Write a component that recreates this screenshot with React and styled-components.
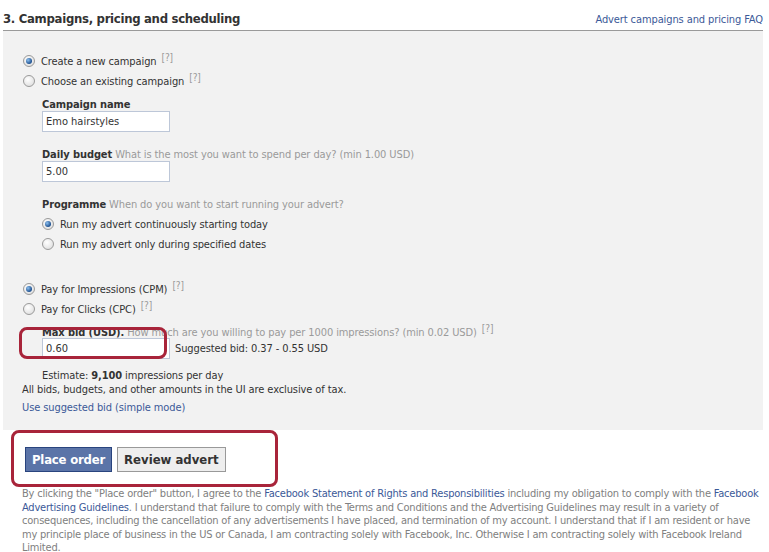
import styled, { createGlobalStyle } from "styled-components";

const GlobalStyle = createGlobalStyle`
  body {
    margin: 0;
    background: #fff;
    font-family: "DejaVu Sans Condensed", "DejaVu Sans", sans-serif;
    font-size: 11px;
    letter-spacing: -0.1px;
    color: #333;
  }
`;

const Page = styled.div`
  width: 769px;
  height: 552px;
  overflow: hidden;
`;

const Header = styled.div`
  margin-left: 3px;
  width: 760px;
  height: 31px;
  border-bottom: 1px solid #9a9a9a;
  display: flex;
  justify-content: space-between;
  align-items: baseline;
  box-sizing: border-box;
  padding-top: 11px;
`;

const Title = styled.h2`
  margin: 0;
  font-size: 13px;
  font-weight: bold;
  letter-spacing: -0.3px;
  color: #333;
`;

const FaqLink = styled.a`
  color: #3b5998;
  font-size: 11px;
  text-decoration: none;
`;

const Panel = styled.div`
  margin-left: 3px;
  width: 760px;
  height: 399px;
  background: #f2f2f2;
  box-sizing: border-box;
  padding: 20px 0 0 20px;
  display: flex;
  flex-direction: column;
`;

const RadioRow = styled.label`
  height: 20px;
  display: flex;
  align-items: center;
  gap: 6px;
`;

const Radio = styled.span`
  width: 12px;
  height: 12px;
  border-radius: 50%;
  border: 1px solid #9a9a9a;
  box-sizing: border-box;
  background: radial-gradient(circle at 40% 35%, #ffffff, #d8d8d8);
  display: inline-flex;
  align-items: center;
  justify-content: center;
  &::after {
    content: "";
    display: ${(p) => (p.$checked ? "block" : "none")};
    width: 6px;
    height: 6px;
    border-radius: 50%;
    background: radial-gradient(circle at 35% 35%, #8cc0f0, #1d4f8e 70%);
  }
`;

const Help = styled.sup`
  color: #9a9a9a;
  font-size: 10px;
  margin-left: 5px;
  line-height: 0;
  position: relative;
  top: 1px;
`;

const Field = styled.div`
  margin-left: ${(p) => (p.$flush ? 0 : 19)}px;
  margin-top: ${(p) => p.$top || 0}px;
  position: relative;
`;

const Label = styled.div`
  height: 14px;
  line-height: 14px;
  margin-bottom: ${(p) => p.$gap || 0}px;
  color: #9a9a9a;
  b {
    color: #333;
  }
`;

const Input = styled.input`
  width: 128px;
  height: 21px;
  box-sizing: border-box;
  border: 1px solid #bdc7d8;
  background: #fff;
  font: inherit;
  color: #333;
  padding: 0 3px;
  margin: 0;
  outline: none;
`;

const InputRow = styled.div`
  display: flex;
  align-items: center;
  gap: 5px;
`;

const Highlight = styled.div`
  position: absolute;
  left: ${(p) => p.$x}px;
  top: ${(p) => p.$y}px;
  width: ${(p) => p.$w}px;
  height: ${(p) => p.$h}px;
  border: 3px solid #a8243a;
  border-radius: 8px;
  box-sizing: border-box;
  pointer-events: none;
`;

const Estimate = styled.div`
  margin: 10px 0 0 19px;
  line-height: 14px;
`;

const Note = styled.div`
  line-height: 14px;
  margin-left: -1px;
`;

const TextLink = styled.a`
  color: #3b5998;
  text-decoration: none;
`;

const SmallLink = styled(TextLink)`
  margin: 4px 0 0 -1px;
  line-height: 14px;
`;

const Actions = styled.div`
  position: relative;
  display: flex;
  gap: 5px;
  padding: 17px 0 0 25px;
  height: 57px;
  box-sizing: border-box;
`;

const Button = styled.button`
  height: 25px;
  padding: 0 6px;
  font-family: inherit;
  font-size: 13px;
  font-weight: bold;
  letter-spacing: ${(p) => (p.$primary ? "-0.2px" : "0")};
  border: 1px solid ${(p) => (p.$primary ? "#29447e" : "#999")};
  background: ${(p) => (p.$primary ? "#5b74a8" : "#eeeeee")};
  color: ${(p) => (p.$primary ? "#fff" : "#333")};
  cursor: pointer;
`;

const Legal = styled.p`
  margin: 0 0 0 22px;
  width: 747px;
  color: #808080;
  letter-spacing: -0.2px;
  line-height: 13.5px;
`;

const App = () => {
  return (
    <Page>
      <GlobalStyle />
      <Header>
        <Title>3. Campaigns, pricing and scheduling</Title>
        <FaqLink href="#">Advert campaigns and pricing FAQ</FaqLink>
      </Header>
      <Panel>
        <RadioRow>
          <Radio $checked />
          <span>
            Create a new campaign<Help>[?]</Help>
          </span>
        </RadioRow>
        <RadioRow>
          <Radio />
          <span>
            Choose an existing campaign<Help>[?]</Help>
          </span>
        </RadioRow>

        <Field $top={7}>
          <Label $gap={-1}>
            <b>Campaign name</b>
          </Label>
          <Input defaultValue="Emo hairstyles" />
        </Field>

        <Field $top={16}>
          <Label $gap={-1}>
            <b>Daily budget</b> What is the most you want to spend per day? (min 1.00 USD)
          </Label>
          <Input defaultValue="5.00" />
        </Field>

        <Field $top={16}>
          <Label $gap={2}>
            <b>Programme</b> When do you want to start running your advert?
          </Label>
          <RadioRow>
            <Radio $checked />
            <span>Run my advert continuously starting today</span>
          </RadioRow>
          <RadioRow>
            <Radio />
            <span>Run my advert only during specified dates</span>
          </RadioRow>
        </Field>

        <Field $flush $top={25}>
          <RadioRow>
            <Radio $checked />
            <span>
              Pay for Impressions (CPM)<Help>[?]</Help>
            </span>
          </RadioRow>
          <RadioRow>
            <Radio />
            <span>
              Pay for Clicks (CPC)<Help>[?]</Help>
            </span>
          </RadioRow>
        </Field>

        <Field $top={7}>
          <Label $gap={-2}>
            <b>Max bid (USD).</b> How much are you willing to pay per 1000 impressions? (min 0.02 USD)
            <Help>[?]</Help>
          </Label>
          <InputRow>
            <Input defaultValue="0.60" />
            <span>Suggested bid: 0.37 - 0.55 USD</span>
          </InputRow>
          <Highlight $x={-23} $y={1} $w={148} $h={32} />
        </Field>

        <Estimate>
          Estimate: <b>9,100</b> impressions per day
        </Estimate>
        <Note>All bids, budgets, and other amounts in the UI are exclusive of tax.</Note>
        <SmallLink href="#">Use suggested bid (simple mode)</SmallLink>
      </Panel>

      <Actions>
        <Button $primary>Place order</Button>
        <Button>Review advert</Button>
        <Highlight $x={11} $y={0} $w={267} $h={57} />
      </Actions>

      <Legal>
        By clicking the "Place order" button, I agree to the{" "}
        <TextLink href="#">Facebook Statement of Rights and Responsibilities</TextLink> including my
        obligation to comply with the <TextLink href="#">Facebook</TextLink>
        <br />
        <TextLink href="#">Advertising Guidelines</TextLink>. I understand that failure to comply with
        the Terms and Conditions and the Advertising Guidelines may result in a variety of
        <br />
        consequences, including the cancellation of any advertisements I have placed, and termination
        of my account. I understand that if I am resident or have
        <br />
        my principle place of business in the US or Canada, I am contracting solely with Facebook,
        Inc. Otherwise I am contracting solely with Facebook Ireland
        <br />
        Limited.
      </Legal>
    </Page>
  );
};

export default App;
